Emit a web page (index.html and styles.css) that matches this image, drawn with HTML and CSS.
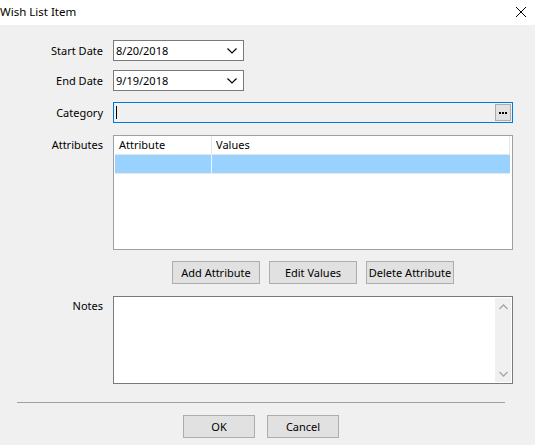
FILE: index.html
```html
<!DOCTYPE html>
<html lang="en">
  <head>
    <meta charset="UTF-8" />
    <title>Wish List Item</title>
    <link rel="stylesheet" href="styles.css">
  </head>
  <body>
    <div class="titlebar">
      <span class="title">Wish List Item</span>
      <svg class="close" width="12" height="12" viewBox="0 0 12 12">
        <path d="M1 1 L11 11 M11 1 L1 11" stroke="#000" stroke-width="1" fill="none" />
      </svg>
    </div>

    <div class="dialog">
      <div class="row row-date">
        <label class="label">Start Date</label>
        <div class="datepicker">
          <span>8/20/2018</span>
          <svg class="chevron" width="10" height="6" viewBox="0 0 10 6">
            <path d="M0.5 0.5 L5 5 L9.5 0.5" stroke="#000" stroke-width="1.2" fill="none" />
          </svg>
        </div>
      </div>
      <div class="row row-date row-end">
        <label class="label">End Date</label>
        <div class="datepicker">
          <span>9/19/2018</span>
          <svg class="chevron" width="10" height="6" viewBox="0 0 10 6">
            <path d="M0.5 0.5 L5 5 L9.5 0.5" stroke="#000" stroke-width="1.2" fill="none" />
          </svg>
        </div>
      </div>
      <div class="row row-category">
        <label class="label">Category</label>
        <div class="lookup">
          <span class="caret"></span>
          <button class="lookup-btn" type="button">
            <span class="dot"></span><span class="dot"></span><span class="dot"></span>
          </button>
        </div>
      </div>
      <div class="row row-top row-attrs">
        <label class="label label-top">Attributes</label>
        <div class="listview">
          <div class="lv-row lv-head">
            <div class="lv-cell lv-col1">Attribute</div>
            <div class="lv-cell lv-col2">Values</div>
          </div>
          <div class="lv-row lv-selected">
            <div class="lv-cell lv-col1"></div>
            <div class="lv-cell lv-col2"></div>
          </div>
        </div>
      </div>
      <div class="row row-actions">
        <div class="spacer"></div>
        <div class="actions">
          <button class="btn btn-wide" type="button">Add Attribute</button>
          <button class="btn btn-wide" type="button">Edit Values</button>
          <button class="btn btn-wide" type="button">Delete Attribute</button>
        </div>
      </div>
      <div class="row row-top row-notes">
        <label class="label label-notes">Notes</label>
        <div class="notes">
          <div class="notes-text"></div>
          <div class="scrollbar">
            <svg width="9" height="6" viewBox="0 0 9 6">
              <path d="M0.5 5 L4.5 1 L8.5 5" stroke="#a6a6a6" stroke-width="1.3" fill="none" />
            </svg>
            <svg width="9" height="6" viewBox="0 0 9 6">
              <path d="M0.5 1 L4.5 5 L8.5 1" stroke="#a6a6a6" stroke-width="1.3" fill="none" />
            </svg>
          </div>
        </div>
      </div>

      <div class="separator"></div>
      <div class="footer">
        <button class="btn btn-dialog" type="button">OK</button>
        <button class="btn btn-dialog" type="button">Cancel</button>
      </div>
    </div>
  </body>
</html>
```

FILE: styles.css
```css
body {
  margin: 0;
  background-color: #f0f0f0;
  font-family: 'Noto Sans', 'Liberation Sans', Arial, sans-serif;
  font-size: 11px;
  color: #000;
}
.titlebar {
  height: 25px;
  background-color: #fff;
  display: flex;
  align-items: center;
  justify-content: space-between;
  padding: 0 8px 0 0;
}
.title {
  font-size: 11.5px;
  line-height: 16px;
  margin-top: -2px;
}
.close {
  margin-top: -2px;
}
.dialog {
  padding-top: 15px;
}
.row {
  display: flex;
  align-items: center;
}
.row-top {
  align-items: flex-start;
}
.label {
  width: 103px;
  margin-right: 10px;
  text-align: right;
  line-height: 16px;
}
.label-top {
  padding-top: 2px;
}
.label-notes {
  padding-top: 2px;
}
.spacer {
  width: 113px;
}
.datepicker {
  box-sizing: border-box;
  width: 131px;
  height: 21px;
  background-color: #fff;
  border: 1px solid #7a7a7a;
  display: flex;
  align-items: center;
  justify-content: space-between;
  padding: 0 6px 0 2px;
  line-height: 16px;
}
.chevron {
  margin-top: 1px;
}
.row-end {
  margin-top: 9px;
}
.row-category {
  margin-top: 11px;
}
.lookup {
  box-sizing: border-box;
  width: 400px;
  height: 21px;
  border: 1px solid #0078d7;
  background-color: #f0f0f0;
  display: flex;
  align-items: center;
  justify-content: space-between;
  padding: 0 1px 0 2px;
}
.caret {
  width: 1px;
  height: 13px;
  background-color: #000;
}
.lookup-btn {
  box-sizing: border-box;
  width: 16px;
  height: 17px;
  padding: 0;
  background-color: #e1e1e1;
  border: 1px solid #adadad;
  display: flex;
  align-items: center;
  justify-content: center;
  gap: 1px;
}
.dot {
  width: 2px;
  height: 2px;
  background-color: #000;
}
.row-attrs {
  margin-top: 12px;
}
.listview {
  box-sizing: border-box;
  width: 400px;
  height: 115px;
  background-color: #fff;
  border: 1px solid #a0a0a0;
  padding: 0 2px 0 1px;
}
.lv-row {
  display: flex;
  height: 19px;
}
.lv-cell {
  box-sizing: border-box;
  padding-left: 4px;
  line-height: 18px;
}
.lv-col1 {
  width: 97px;
}
.lv-col2 {
  flex: 1;
}
.lv-head {
  border-bottom: 1px solid #e5e5e5;
  border-right: 1px solid #e5e5e5;
  height: 19px;
  box-sizing: border-box;
}
.lv-head .lv-col1 {
  border-right: 1px solid #e5e5e5;
}
.lv-selected {
  background-color: #99d1ff;
  border-bottom: 1px solid #e8e8e8;
  height: 19px;
  box-sizing: border-box;
}
.lv-selected .lv-col1 {
  border-right: 1px solid #eaf5ff;
}
.row-actions {
  margin-top: 11px;
}
.actions {
  width: 400px;
  display: flex;
  justify-content: center;
  gap: 9px;
}
.btn {
  box-sizing: border-box;
  height: 23px;
  padding: 0;
  background-color: #e1e1e1;
  border: 1px solid #adadad;
  font-family: inherit;
  font-size: 11px;
  color: #000;
  white-space: nowrap;
}
.btn-wide {
  width: 88px;
}
.row-notes {
  margin-top: 12px;
}
.notes {
  box-sizing: border-box;
  width: 400px;
  height: 88px;
  background-color: #fff;
  border: 1px solid #7a7a7a;
  display: flex;
  padding: 1px;
}
.notes-text {
  flex: 1;
}
.scrollbar {
  width: 16px;
  background-color: #f0f0f0;
  display: flex;
  flex-direction: column;
  justify-content: space-between;
  align-items: center;
  padding: 6px 0 5px;
}
.separator {
  margin: 18px 0 0 17px;
  width: 488px;
  height: 1px;
  background-color: #a0a0a0;
}
.footer {
  width: 488px;
  margin: 12px 0 0 17px;
  display: flex;
  justify-content: center;
  gap: 12px;
}
.btn-dialog {
  width: 72px;
}
```
